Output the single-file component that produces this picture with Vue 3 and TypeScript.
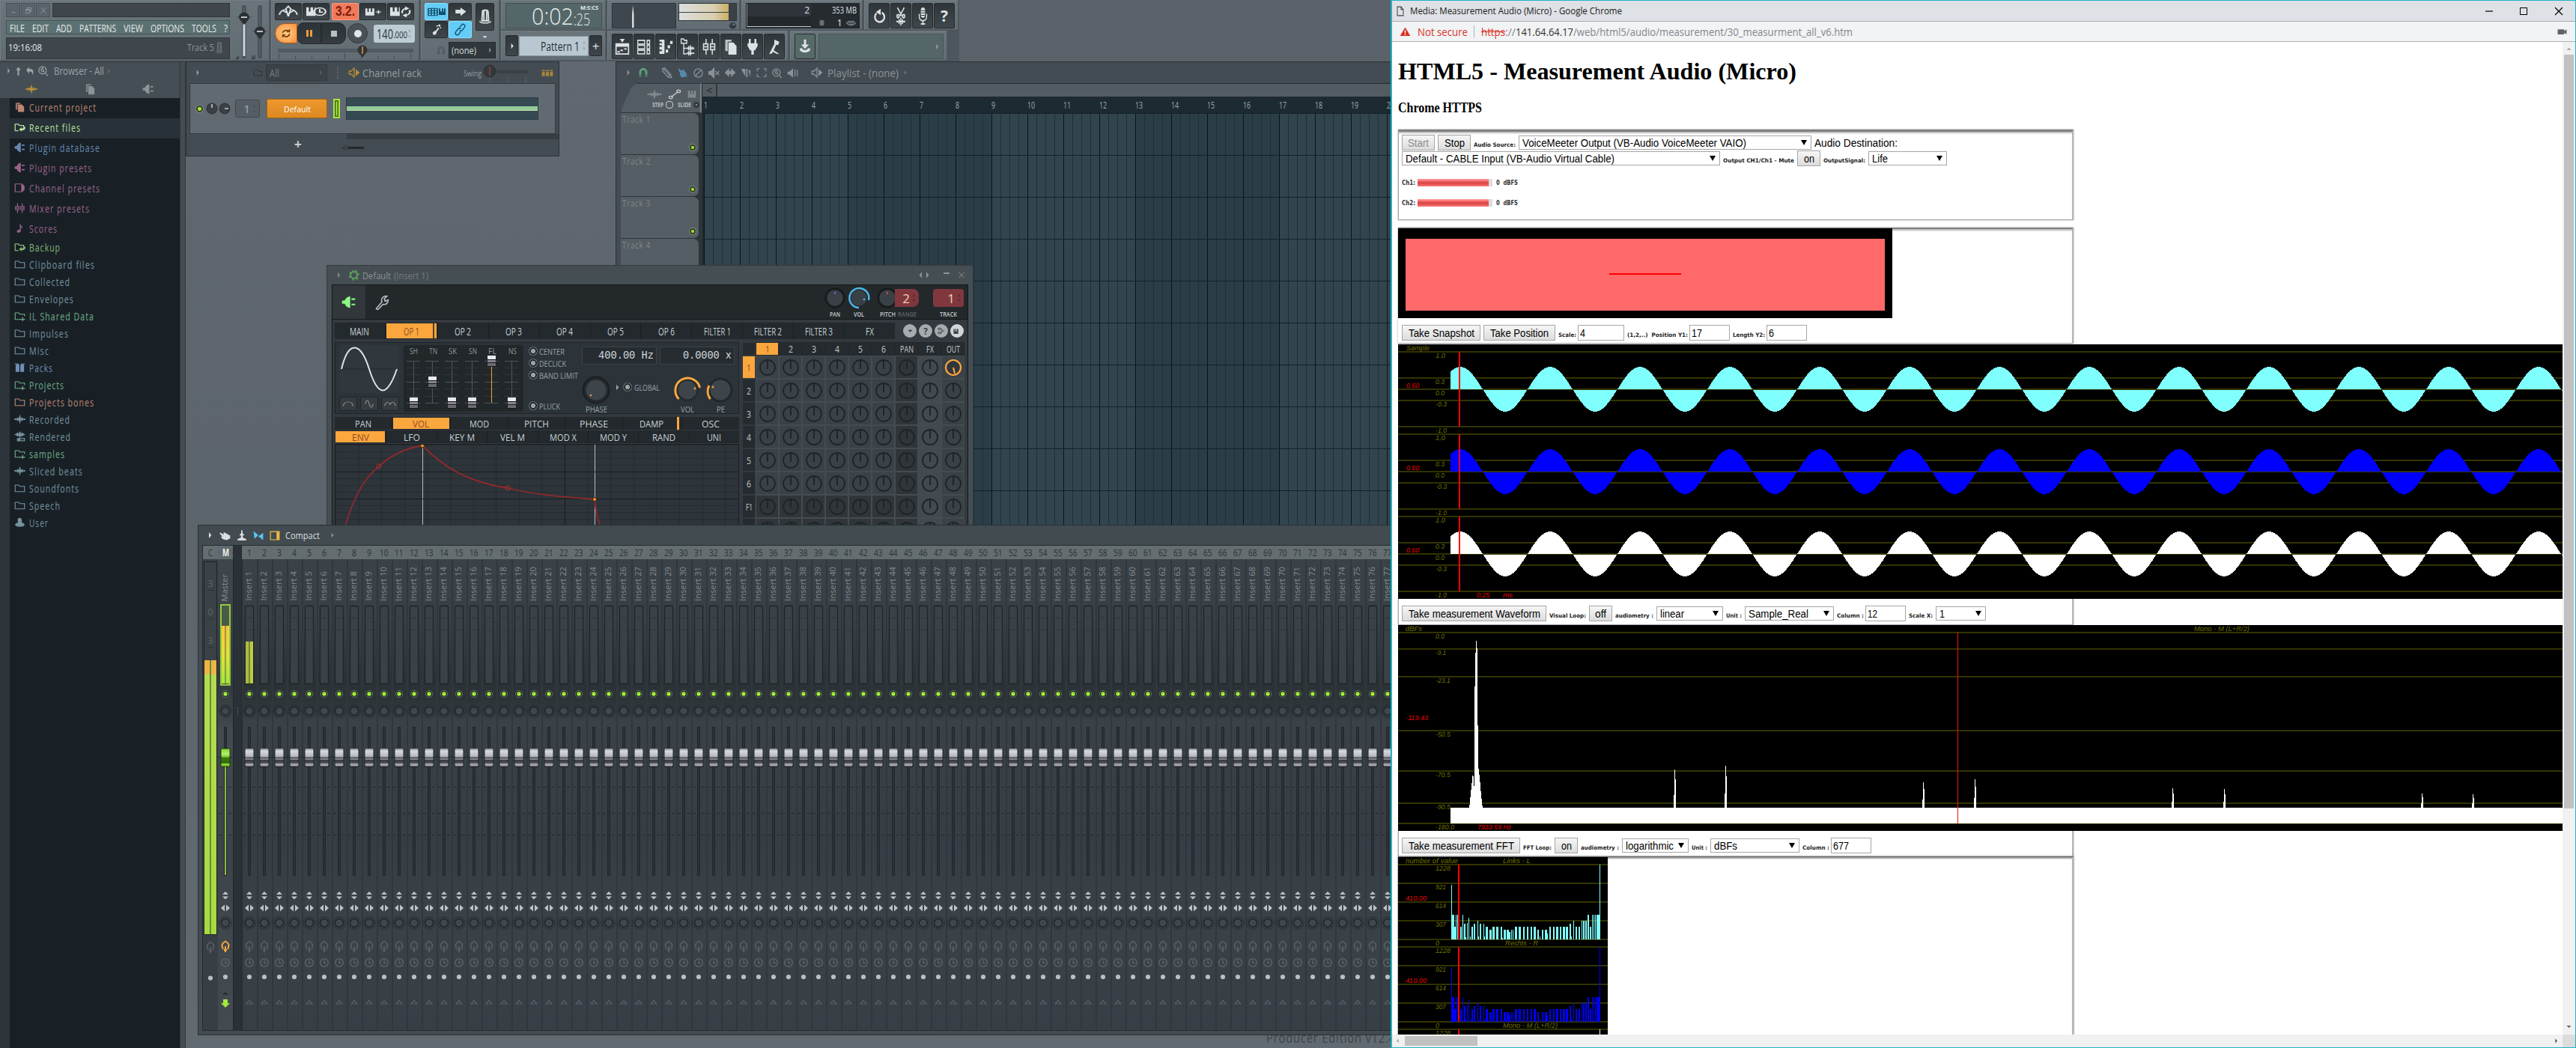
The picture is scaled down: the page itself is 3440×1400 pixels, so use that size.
<script setup lang="ts">
import { h } from 'vue'

/* Condenses an inline text to a given advance width, keeping the flow in step. */
const vFit = {
  mounted(el: HTMLElement, b: { value: number }) {
    const n = el.getBoundingClientRect().width
    if (!n || !b.value) return
    el.style.transformOrigin = '0 50%'
    el.style.transform = `scaleX(${b.value / n})`
    el.style.marginRight = `${b.value - n}px`
  },
}

const F = 'fill="currentColor"'
const S = 'fill="none" stroke="currentColor" stroke-width="2"'
const icons: Record<string, string> = {
  min: `<path d="M7 16h10v2H7z" ${F}/>`,
  restore: `<path d="M5 9h10v10H5zM9 9V5h10v10h-4M5 11h10" ${S}/>`,
  close: `<path d="M5 4l14 16M19 4L5 20" ${S}/>`,
  hat: `<path d="M8 5c0-2 8-2 8 0l1 12H7zM10 5v11M14 5v11" ${S}/><path d="M3 17c0 5 18 5 18 0-4 3-14 3-18 0z" ${F}/>`,
  metro: `<path d="M12 2l3 5-3 14-3-14zM1 18c1-6 4-9 7-10M23 18c-1-6-4-9-7-10M5 10l5 4M19 10l-5 4" ${S}/>`,
  piano: `<path d="M1 4h4v9h2V4h3v9h2V4h4v17H1z" ${F}/>`,
  keyclock: `<path d="M0 4h3v8h2V4h3v8h2V4h1v16H0z" ${F}/><circle cx="16" cy="12" r="7" ${S}/><path d="M16 7v6h4" ${S}/>`,
  keyplus: `<path d="M1 4h3v8h2V4h3v8h2V4h3v16H1z" ${F}/><path d="M16 12h8M20 8v8" ${S}/>`,
  keyloop: `<path d="M0 4h3v8h2V4h3v8h2V4h1v16H0z" ${F}/><path d="M14 15a5 7 0 0 1 4-9M22 9a5 7 0 0 1-4 10" ${S}/><path d="M17 2l5 4-5 4zM19 15l-5 4 5 4z" ${F}/>`,
  loop: `<path d="M5 11a7 7 0 0 1 11-4M19 13a7 7 0 0 1-11 5" fill="none" stroke="currentColor" stroke-width="3"/><path d="M20 2v8h-8zM4 22v-8h8z" ${F}/>`,
  typing: `<path d="M1 4h12v16H1zM1 9h12M1 14h12M5 4v16M9 4v16" fill="none" stroke="currentColor" stroke-width="1.6"/><path d="M15 4h2v7h2V4h2v7h1V4h2v15h-9z" ${F}/>`,
  right: `<path d="M3 8h9V3l10 9-10 9v-5H3z" ${F}/>`,
  foot: `<path d="M5 17c0 5 6 5 7 0 0-4 5-4 4-9l-3 1c0 5-5 4-8 8z" ${F}/><circle cx="17" cy="4" r="2" ${F}/><circle cx="13" cy="5" r="1.4" ${F}/><circle cx="19" cy="8" r="1.2" ${F}/>`,
  link: `<path d="M11 8l4-5c3-3 8 1 5 5l-4 5c-2 2-4 2-5 0M13 16l-4 5c-3 3-8-1-5-5l4-5c2-2 4-2 5 0" ${S}/>`,
  magnet: `<path d="M6 20V11a6 6 0 0 1 12 0v9" fill="none" stroke="currentColor" stroke-width="4.5"/><path d="M3 17h7M14 17h7" stroke="#434c52" stroke-width="1.4"/>`,
  tri: `<path d="M8 4l9 8-9 8z" ${F}/>`,
  tril: `<path d="M16 4l-9 8 9 8z" ${F}/>`,
  trid: `<path d="M4 8h16l-8 9z" ${F}/>`,
  undo: `<path d="M7 8a8 8 0 1 0 9-1" fill="none" stroke="currentColor" stroke-width="3"/><path d="M14 1v10L6 6z" ${F}/>`,
  cut: `<path d="M6 1l8 11M18 1l-8 11" ${S}/><circle cx="7" cy="12" r="2" ${S}/><circle cx="17" cy="12" r="2" ${S}/><path d="M4 19h16M9 16v6M12 14v10M15 16v6" ${S}/>`,
  mic: `<rect x="8" y="1" width="8" height="13" rx="4" ${F}/><path d="M5 9v3c0 8 14 8 14 0V9M12 18v4M8 22h8" ${S}/><path d="M8 5h8M8 8h8M8 11h8" stroke="#373e43"/>`,
  plist: `<path d="M2 8h20v14H2z" ${S}/><path d="M2 8h20v4H2zM8 1h8l-4 5zM4 18h4v2H4zM9 16h4v2H9zM15 14h4v2h-4z" ${F}/>`,
  steps: `<path d="M2 3h11v5H2zM2 10h11v5H2zM2 17h11v5H2zM17 3h4v5h-4zM17 10h4v5h-4zM17 17h4v5h-4z" fill="none" stroke="currentColor" stroke-width="1.6"/>`,
  roll: `<path d="M2 2h8v20H2v-4h4v-2H2v-4h4v-2H2V7h4V5H2z" ${F}/><path d="M12 16h4v4h-4zM15 10h4v4h-4zM19 4h4v4h-4z" ${F}/>`,
  tree: `<path d="M2 6V1h4l1 2h4v4H2zM6 8v14h5M6 14h5" fill="none" stroke="currentColor" stroke-width="1.6"/><path d="M11 14h12M14 11v6M17 10v8M20 12v4M11 21h12M14 18v6M17 17v7" ${S} />`,
  mixer: `<path d="M7 1v7M7 16v7M17 1v7M17 16v7M3 8h7v8H3zM14 8h7v8h-7zM3 12h7M14 12h7" fill="none" stroke="currentColor" stroke-width="1.8"/>`,
  docs: `<path d="M3 2h10v3H7v13H3z" ${F} opacity=".8"/><path d="M8 6h8l5 5v12H8z" ${F}/>`,
  plugv: `<path d="M6 1h3v6h6V1h3v6h2v4l-4 6h-2v6h-4v-6H8l-4-6V7h2z" ${F}/>`,
  hammer: `<path d="M12 2l8 3-2 5-6-2zM4 22l8-14 3 1-4 8 9 5h-4l-6-3-3 3z" ${F}/>`,
  dl: `<path d="M10 1h4v8h5l-7 7-7-7h5z" ${F}/><path d="M3 15c-3 9 21 9 18 0l-4 0c0 4-10 4-10 0z" ${F}/>`,
  up: `<path d="M12 2l6 8h-4v12h-4V10H6z" ${F}/>`,
  back: `<path d="M9 2v5c8-1 13 3 9 14-1-7-4-9-9-8v5L2 10z" ${F}/>`,
  zoomi: `<circle cx="11" cy="11" r="8" ${S}/><path d="M11 6c-6 3-2 9 3 8zM17 17l5 6" ${S}/>`,
  wave: `<path d="M0 11l3-1 2 1 2-4 1 3 2-1 2-8 2 8 2 1 1-3 2 4 2-1 3 1v2l-3 1-2-1-2 4-1-3-2 1-2 8-2-8-2-1-1 3-2-4-2 1-3-1z" ${F}/>`,
  wavebar: `<path d="M0 8l5-3 2-3 2 4 3-6 3 6 2-4 2 3 5 3-5 2-2 3-2-3-3 6-3-6-2 3-2-3z" ${F}/><path d="M7 17h15v5H7z" ${S}/><path d="M7 17h6v5H7z" ${F}/>`,
  plug: `<path d="M1 9h4c2-5 6-8 9-8v22c-3 0-7-3-9-8H1z" ${F}/><path d="M16 5h6v3h-6zM16 15h6v3h-6z" ${F}/>`,
  folder: `<path d="M2 5h8l2 3h10v12H2z" fill="none" stroke="currentColor" stroke-width="1.8"/>`,
  folderr: `<path d="M9 20H2V5h7l2 3h9v5" ${S}/><path d="M24 12c0 6-5 8-8 7v3l-6-5 6-5v3c3 0 5-1 5-5z" ${F}/>`,
  folderp: `<path d="M13 20H2V5h8l2 3h10v5" fill="none" stroke="currentColor" stroke-width="1.8"/><path d="M13 20h10M18 15v9" ${S}/>`,
  chan: `<path d="M2 3h14v18H2z" ${S}/><path d="M16 4h3l3 4v8l-3 4h-3z" ${F}/>`,
  note: `<path d="M12 1c2 6 7 6 5 13 0-4-2-5-3-5v8c-1 7-10 6-8 1 1-3 4-3 6-3z" ${F}/>`,
  box: `<path d="M3 7h8v15H3zM13 7h8v15h-8zM0 3l9 0 2 4H5zM24 3l-9 0-2 4h6z" ${F}/>`,
  user: `<path d="M8 3c4-4 10 0 8 7-1 3 7 3 6 8-2 5-18 5-20 0-1-5 7-5 6-8-1-2-1-5 0-7z" ${F}/>`,
  pencil: `<path d="M3 3l4-2 13 14 2 7-7-1L3 8zM5 3l13 14M15 20l4-4" ${S}/>`,
  brush: `<path d="M3 1l6 6 4-3 8 9-1 4 4 5-5-3-8 3-5-6 1-4-4-6z" ${F}/>`,
  nope: `<circle cx="12" cy="12" r="9" ${S}/><path d="M6 18L18 6" ${S}/>`,
  mutex: `<path d="M1 9h4l7-7v20l-7-7H1zM15 8l8 8M23 8l-8 8" ${F} stroke="currentColor" stroke-width="2"/>`,
  lr: `<path d="M10 3v6h4V3l9 9-9 9v-6h-4v6l-9-9z" ${F}/>`,
  slice: `<path d="M1 3h9v16zM12 3h3v18h-3zM17 6h4v16z" ${F}/>`,
  sel: `<path d="M2 9V3h6M16 3h6v6M22 15v6h-6M8 21H2v-6" ${S}/>`,
  spk: `<path d="M1 9h4l8-7v20l-8-7H1zM16 5h2v14h-2zM21 5h2v14h-2z" ${F}/>`,
  spko: `<path d="M2 9h4l6-6v18l-6-6H2z" ${S}/><path d="M15 5l8 7-8 7z" ${F}/>`,
  slide: `<path d="M6 18L18 6" ${S}/><circle cx="5" cy="19" r="3" ${S}/><circle cx="19" cy="5" r="3" ${S}/>`,
  gear: `<circle cx="12" cy="12" r="7" fill="none" stroke="currentColor" stroke-width="3"/><path d="M9 1h3v4H9zM15 2h4v4h-4zM3 5h4v4H3zM1 14h4v3H1zM9 19h3v4H9zM17 17h4v4h-4zM20 8h3v4h-3z" ${F}/>`,
  wrench: `<path d="M3 22l9-11c-2-6 3-10 8-9l-4 4 1 4 5-2c0 6-4 8-8 7L5 24z" ${S}/>`,
  hand: `<path d="M1 4l8 5V3l6 4 8 5 0 7-7 4-8-2-5-5 3-2-5-6z" ${F}/>`,
  pin: `<path d="M11 0h2l1 8 4 3-4 2v4l8 4v3H2v-3l8-4v-4l-4-2 4-3z" ${F}/>`,
  swap: `<path d="M1 1l11 10L3 20zM23 5v18l-11-9z" ${F}/>`,
  pane: `<path d="M2 2h20v20H2z" ${S}/><path d="M16 2h6v20h-6z" ${F}/>`,
  warn: `<path d="M12 1l11 21H1z" ${F}/><path d="M12 8v7M12 17v3" stroke="#fff" stroke-width="2.4"/>`,
  page: `<path d="M4 2h10l6 6v14H4zM14 2v6h6" ${S}/>`,
  cam: `<path d="M1 3h16v6l6-6v18l-6-6v6H1z" ${F}/>`,
  mouth: `<path d="M1 12c5-8 8-8 11-6 3-2 6-2 11 6-6 9-16 9-22 0z" ${F}/><path d="M5 12h14" stroke="#23282c" stroke-width="2"/>`,
  chip: `<path d="M6 3h12v18H6zM2 6h20M2 11h20M2 16h20" ${F} stroke="currentColor" stroke-width="1.6"/>`,
  clock: `<circle cx="12" cy="12" r="9" fill="none" stroke="currentColor" stroke-width="3"/><path d="M12 3v9h9A9 9 0 0 1 3 14z" ${F}/>`,
  bars: `<path d="M1 3h6v18H1zM9 3h6v18H9zM17 3h6v18h-6z" ${F}/><path d="M1 8h22" stroke="#434c52" stroke-width="2"/>`,
  out: `<path d="M2 3h8v5H2zM2 16h8v5H2zM10 6h4v12h-4M14 12h8" ${S}/>`,
  updn: `<path d="M6 9l6-6 6 6M6 15l6 6 6-6" ${S}/>`,
  arch: `<path d="M2 20c2-20 18-20 20 0" ${S}/>`,
  sine: `<path d="M3 12c3-14 6-12 9 0s6 14 9 0" ${S}/>`,
  humps: `<path d="M1 19C4 3 9 3 12 15 15 3 20 3 23 19" ${S}/>`,
}
const Ic = (p: { n: string; w?: number | string; t?: number | string }) =>
  h('svg', {
    width: p.w ?? 14, height: p.t ?? p.w ?? 14, viewBox: '0 0 24 24', preserveAspectRatio: 'none',
    style: 'display:block;flex:none', innerHTML: icons[p.n],
  })
Ic.props = ['n', 'w', 't']

const menu: [string, number][] = [['FILE', 20], ['EDIT', 22], ['ADD', 21], ['PATTERNS', 49], ['VIEW', 26], ['OPTIONS', 45], ['TOOLS', 33], ['?', 5]]

type Item = { t: string; w: number; c: string; i: string; big?: boolean; on?: boolean }
const g = '#77929f', gr = '#6fae86'
const items: Item[] = [
  { t: 'Current project', w: 90, c: '#bf8672', i: 'docs', big: true },
  { t: 'Recent files', w: 69, c: '#b5e2a0', i: 'folderr', big: true, on: true },
  { t: 'Plugin database', w: 95, c: '#6688b0', i: 'plug', big: true },
  { t: 'Plugin presets', w: 84, c: '#9a6488', i: 'plug', big: true },
  { t: 'Channel presets', w: 95, c: '#9a6488', i: 'chan', big: true },
  { t: 'Mixer presets', w: 81, c: '#9a6488', i: 'mixer', big: true },
  { t: 'Scores', w: 38, c: '#9a6488', i: 'note', big: true },
  { t: 'Backup', w: 42, c: '#85b577', i: 'folderr' },
  { t: 'Clipboard files', w: 88, c: g, i: 'folder' },
  { t: 'Collected', w: 55, c: g, i: 'folder' },
  { t: 'Envelopes', w: 60, c: g, i: 'folder' },
  { t: 'IL Shared Data', w: 87, c: gr, i: 'folderp' },
  { t: 'Impulses', w: 53, c: g, i: 'folder' },
  { t: 'Misc', w: 27, c: g, i: 'folder' },
  { t: 'Packs', w: 32, c: '#6f8fb5', i: 'box' },
  { t: 'Projects', w: 47, c: gr, i: 'folderp' },
  { t: 'Projects bones', w: 87, c: '#bf8672', i: 'folder' },
  { t: 'Recorded', w: 55, c: g, i: 'wave' },
  { t: 'Rendered', w: 56, c: g, i: 'wavebar' },
  { t: 'samples', w: 48, c: gr, i: 'folderp' },
  { t: 'Sliced beats', w: 72, c: g, i: 'wave' },
  { t: 'Soundfonts', w: 67, c: g, i: 'folder' },
  { t: 'Speech', w: 42, c: g, i: 'folder' },
  { t: 'User', w: 26, c: g, i: 'user' },
]

const plTools = [
  ['pencil', 15, '#8b9399', 16], ['brush', 15, '#5688ab', 6], ['nope', 15, '#8b9399', 6], ['mutex', 15, '#8b9399', 6],
  ['lr', 16, '#8b9399', 6], ['slice', 15, '#8b9399', 6], ['sel', 14, '#8b9399', 6], ['zoomi', 15, '#8b9399', 6], ['spk', 15, '#8b9399', 6],
] as [string, number, string, number][]
const bars = Array.from({ length: 20 }, (_, i) => i + 1)

const opTabs: [string, number][] = [['MAIN', 26], ['OP 1', 21], ['OP 2', 22], ['OP 3', 22], ['OP 4', 22], ['OP 5', 22], ['OP 6', 22], ['FILTER 1', 36], ['FILTER 2', 37], ['FILTER 3', 37], ['FX', 11]]
const modTabs: [string, number][] = [['PAN', 22], ['VOL', 22], ['MOD', 26], ['PITCH', 33], ['PHASE', 38], ['DAMP', 32], ['OSC', 24]]
const envTabs: [string, number][] = [['ENV', 23], ['LFO', 22], ['KEY M', 34], ['VEL M', 33], ['MOD X', 36], ['MOD Y', 36], ['RAND', 31], ['UNI', 19]]
const sliders = [
  { n: 'SH', x: 13, y: 77 }, { n: 'TN', x: 38, y: 49 }, { n: 'SK', x: 64, y: 77 }, { n: 'SN', x: 91, y: 77 }, { n: 'FL', x: 117, y: 21 }, { n: 'NS', x: 144, y: 77 },
]
const cols = ['1', '2', '3', '4', '5', '6', 'PAN', 'FX', 'OUT']
const rows = ['1', '2', '3', '4', '5', '6', 'F1', 'F2']

const inserts = Array.from({ length: 77 }, (_, i) => i + 1)

/* Web page */
type Ctl = { k: 'btn' | 'sel' | 'lab' | 'inp' | 'txt'; t: string; w: number; tw: number; off?: boolean }
const c = (k: Ctl['k'], t: string, w: number, tw: number, off = false): Ctl => ({ k, t, w, tw, off })
const src1 = [c('btn', 'Start', 44, 28, true), c('btn', 'Stop', 44, 27), c('lab', 'Audio Source:', 56, 56), c('sel', 'VoiceMeeter Output (VB-Audio VoiceMeeter VAIO)', 391, 299), c('txt', 'Audio Destination:', 111, 111)]
const src2 = [c('sel', 'Default - CABLE Input (VB-Audio Virtual Cable)', 425, 279), c('lab', 'Output CH1/Ch1 - Mute', 95, 95), c('btn', 'on', 31, 14), c('lab', 'OutputSignal:', 56, 56), c('sel', 'Life', 105, 21)]
const snap = [c('btn', 'Take Snapshot', 105, 88), c('btn', 'Take Position', 96, 78), c('lab', 'Scale:', 24, 24), c('inp', '4', 62, 7), c('lab', '(1,2,..)  Position Y1:', 81, 81), c('inp', '17', 54, 14), c('lab', 'Length Y2:', 43, 43), c('inp', '6', 54, 7)]
const wav = [c('btn', 'Take measurement Waveform', 193, 176), c('lab', 'Visual Loop:', 49, 49), c('btn', 'off', 31, 15), c('lab', 'audiometry :', 51, 51), c('sel', 'linear', 89, 32), c('lab', 'Unit :', 21, 21), c('sel', 'Sample_Real', 119, 80), c('lab', 'Column :', 36, 36), c('inp', '12', 54, 13), c('lab', 'Scale X:', 32, 32), c('sel', '1', 67, 7)]
const fft = [c('btn', 'Take measurement FFT', 158, 141), c('lab', 'FFT Loop:', 38, 38), c('btn', 'on', 31, 14), c('lab', 'audiometry :', 51, 51), c('sel', 'logarithmic', 89, 64), c('lab', 'Unit :', 21, 21), c('sel', 'dBFs', 119, 31), c('lab', 'Column :', 36, 36), c('inp', '677', 54, 21)]

const Row = (p: { r: Ctl[] }) =>
  h('div', { class: 'crow' }, p.r.map((x) => {
    const cls = ['ct', 'ct-' + x.k, x.off ? 'dis' : '']
    const kids = [h(Fit, { w: x.tw, t: x.t })]
    if (x.k === 'sel') kids.push(h('i', { class: 'dn' }))
    return h(x.k === 'btn' ? 'button' : 'span', { class: cls, style: { width: x.w + 'px' } }, kids)
  }))
Row.props = ['r']
const Fit = (p: { w: number; t: string }) =>
  h('span', { class: 'f', onVnodeMounted: (v: any) => vFit.mounted(v.el, { value: p.w }) }, p.t)
Fit.props = ['w', 't']

const wavePath = (() => {
  let d = 'M70 0'
  for (let x = 70; x <= 1555; x++) d += `L${x} ${(-30 * Math.cos(((x - 83) * 2 * Math.PI) / 120)).toFixed(1)}`
  return d + 'L1555 0Z'
})()
const waves = [{ y: 60, f: '#80ffff' }, { y: 170, f: '#0000ff' }, { y: 280, f: '#ffffff' }]
const waveLines = [[-50, '1.0', 13], [-15, '0.3', 12], [0, '0.0', 12], [15, '-0.3', 15], [50, '-1.0', 15]] as [number, string, number][]
const fftLines = [[10, '0.0', 12], [32, '-9.1', 14], [69, '-23.1', 20], [141, '-50.5', 20], [195, '-70.5', 20], [238, '-90.5', 20], [265, '-180.0', 25]] as [number, string, number][]
const peaks = [[369, 193], [437, 188], [701, 210], [770, 206], [1034, 218], [1103, 219], [1367, 225], [1435, 226]]
const histLines = [[0, '1228', 20], [25, '921', 14], [50, '614', 14], [75, '307', 14], [100, '0', 5]] as [number, string, number][]
const A = 67, B = 83, C = 87, D = 79, E = 75
const hist: [number, number, number][] = (
  [[146, 27, 2], [149, A, 4], [153, B, 3], [156, A, 3], [159, A, 2], [167, B, 3], [171, A, 2], [176, D, 2], [178, 97, 2], [182, 78, 2], [186, 71, 2], [188, 96, 1], [193, B, 4], [199, D, 3], [206, E, 2], [208, 96, 3], [213, D, 3], [220, D, 2], [222, 96, 2], [228, B, 5], [236, C, 4], [243, B, 4], [252, B, 4], [261, B, 3], [263, 98, 2], [269, C, 4], [276, C, 4], [281, 90, 3], [285, C, 3], [288, 87, 2], [295, B, 5], [304, B, 4], [313, B, 4], [322, B, 4], [331, B, 4], [339, B, 4], [347, C, 4], [351, 96, 2], [357, C, 4], [365, C, 4], [368, 92, 2], [375, B, 4], [383, B, 4], [391, B, 4], [399, B, 4], [407, B, 4], [414, B, 4], [422, D, 3], [424, 96, 2], [429, E, 2], [435, B, 4], [442, B, 3], [448, E, 2], [453, E, 3], [458, E, 4], [464, A, 3], [468, B, 3], [473, A, 3], [476, A, 2], [480, A, 3], [485, A, 4], [488, A, 3], [490, 0, 2]] as [number, number, number][]
).map(([x, y, w]) => [x / 1.742 - 12 - w / 3.4, y, w / 1.7])
</script>

<template>
  <div class="desk">
    <!-- Playlist -->
    <section class="win playlist">
      <header class="phead">
        <Ic n="tri" w="8" t="12" class="dim" /><Ic n="magnet" w="16" class="mg" />
        <span v-for="t in plTools" :key="t[0]" :style="{ color: t[2], marginLeft: t[3] + 'px' }"><Ic :n="t[0]" :w="t[1]" /></span>
        <Ic n="spko" w="16" class="dim2" /><span v-fit="95" class="t">Playlist - (none)</span><Ic n="tri" w="8" t="10" class="dim3" />
      </header>
      <div class="ptop">
        <div class="corner">
          <div class="cr1"><Ic n="wave" w="20" t="14" /><Ic n="slide" w="18" t="14" class="lt" /><Ic n="piano" w="17" t="13" /></div>
          <div class="cr2"><span v-fit="15" class="t">STEP</span><b class="rb"></b><span v-fit="18" class="t">SLIDE</span><b class="rd"></b></div>
        </div>
        <div class="pr">
          <div class="pscroll"><span class="lt2">&lt;</span><span class="trk"></span></div>
          <div class="ruler"><span v-for="b in bars" :key="b"><em v-fit="b > 9 ? 10 : 5" class="t">{{ b }}</em></span></div>
        </div>
      </div>
      <div class="pbody">
        <div class="tracks">
          <div v-for="n in 10" :key="n" class="track"><span v-fit="n > 9 ? 44 : 38" class="t">Track {{ n }}</span><i class="led"></i></div>
        </div>
        <div class="grid"></div>
      </div>
    </section>

    <div class="edition"><span v-fit="173" class="t">Producer Edition v12.4</span></div>

    <!-- Channel rack -->
    <section class="win rack">
      <header class="rhead">
        <Ic n="tri" w="8" t="12" class="r1" /><Ic n="folder" w="13" t="12" class="r2" />
        <div class="allbox"><span v-fit="13" class="t">All</span><Ic n="tri" w="7" t="10" /></div>
        <i class="dots"></i><Ic n="spko" w="16" class="r3" /><span v-fit="79" class="t rt">Channel rack</span>
        <span v-fit="24" class="t sw">Swing</span>
        <svg width="65" height="28" class="swk"><path d="M18 13h42" stroke="#3a4147" stroke-width="4" /><path d="M8 20v8M32 20v8M56 20v8" stroke="#5a6369" /><circle cx="8" cy="12" r="8" fill="#33383c" stroke="#2a2f33" /><path d="M8 6v12" stroke="#93413c" stroke-width="1.5" /></svg>
        <Ic n="bars" w="16" t="11" class="r4" />
      </header>
      <div class="rbody">
        <i class="led"></i>
        <svg width="36" height="18" class="kn"><circle cx="9" cy="9" r="7" fill="#3a4045" stroke="#282d31" /><circle cx="26" cy="9" r="7" fill="#3a4045" stroke="#282d31" /><path d="M9 3v5M26 9h5" stroke="#c4cacd" stroke-width="1.6" /></svg>
        <div class="num"><span>1</span><Ic n="updn" w="5" t="14" /></div>
        <div class="dflt"><span v-fit="36" class="t">Default</span></div>
        <div class="seli"></div>
        <div class="prev"><i></i></div>
      </div>
      <footer class="rfoot"><span class="plus">+</span><div class="rsc"><i></i><div><span>&lt;</span><b></b></div></div></footer>
    </section>

    <!-- Browser -->
    <aside class="browser">
      <div class="bhead"><Ic n="tri" w="7" t="11" /><Ic n="up" w="13" t="14" /><Ic n="back" w="13" t="14" /><Ic n="zoomi" w="15" t="15" /><span v-fit="67" class="t">Browser - All</span><Ic n="tri" w="7" t="10" class="dim3" /></div>
      <div class="btabs"><Ic n="wave" w="16" t="14" class="or" /><Ic n="docs" w="15" t="16" /><Ic n="plug" w="16" t="14" /></div>
      <ul class="blist">
        <li v-for="it in items" :key="it.t" :class="{ big: it.big, on: it.on }" :style="{ color: it.c }">
          <Ic :n="it.i" w="15" t="14" /><span v-fit="it.w" class="t">{{ it.t }}</span>
        </li>
      </ul>
    </aside>

    <!-- Toolbar -->
    <div class="bar">
      <div class="pan pa">
        <div class="pal">
          <div class="wb"><i><Ic n="min" w="12" /></i><i><Ic n="restore" w="12" /></i><i><Ic n="close" w="12" /></i><b></b></div>
          <nav class="menu"><span v-for="m in menu" :key="m[0]" v-fit="m[1]" class="t">{{ m[0] }}</span></nav>
          <div class="hint"><span v-fit="45" class="t w">19:16:08</span><span v-fit="36" class="t tr">Track 5</span><Ic n="hat" w="14" t="20" /></div>
        </div>
        <svg width="48" height="80" class="vs">
          <rect x="14" y="7" width="4" height="69" fill="#545d64" stroke="#3b4349" /><rect x="14.5" y="28" width="3" height="46" fill="#c8d4da" />
          <rect x="35" y="7" width="4" height="69" fill="#545d64" stroke="#3b4349" />
          <path d="M6 22h20M27 41h20" stroke="#454d53" /><path d="M4 78l5-5v5z" fill="#3a4247" /><path d="M26 73h1v3h1v-3h1v3h1v-3h1v5h-5z" fill="#3a4247" />
          <ellipse cx="16" cy="22" rx="7" ry="6.5" fill="#2c3135" /><path d="M12 28h8l-4 4z" fill="#2c3135" /><path d="M12 22h8" stroke="#e4e8ea" stroke-width="1.6" />
          <ellipse cx="37" cy="41" rx="7" ry="6.5" fill="#2c3135" /><path d="M33 47h8l-4 4z" fill="#2c3135" /><path d="M33 41h8" stroke="#e4e8ea" stroke-width="1.6" />
        </svg>
      </div>
      <div class="pan pb">
        <div class="br"><i class="tb"><Ic n="metro" w="26" t="17" /></i><i class="tb"><Ic n="keyclock" w="27" t="17" /></i><i class="tb red"><em v-fit="26" class="t">3.2.</em></i><i class="tb"><Ic n="keyplus" w="22" t="14" /></i><i class="tb"><Ic n="keyloop" w="28" t="17" /></i></div>
        <div class="br2"><i class="lp"><Ic n="loop" w="16" t="15" /></i><i class="ps"><b></b></i><i class="st"><b></b></i><i class="rc"><b></b></i><div class="tempo"><span v-fit="22" class="t">140</span><span v-fit="19" class="t s">.000</span><Ic n="updn" w="6" t="14" /></div></div>
        <svg width="190" height="22" class="sld"><rect x="5" y="8" width="179" height="3" fill="#59636a" stroke="#42494f" /><path d="M5.500 13v8M27.500 17v4M49.500 17v4M71.500 17v4M93.500 13v8M115.500 17v4M137.500 17v4M159.500 17v4M181.500 13v8" stroke="#454d53" /><circle cx="117" cy="9" r="6.500" fill="#2f3438" /><path d="M114 15h6l-3 4z" fill="#2f3438" /><path d="M117 4v10" stroke="#e8913a" stroke-width="1.6" /></svg>
      </div>
      <div class="pan pc">
        <div class="pcg">
          <div class="pcl"><i class="tb blue"><Ic n="typing" w="24" t="14" /></i><i class="tb"><Ic n="right" w="18" t="15" /></i><i class="tb"><Ic n="foot" w="18" t="18" /></i><i class="tb blue"><Ic n="link" w="17" t="17" /></i></div>
          <div class="pcr"><i class="tb tall"><Ic n="hat" w="22" t="25" /></i><Ic n="trid" w="9" t="7" /></div>
        </div>
        <div class="snapr"><Ic n="magnet" w="14" t="15" /><div class="none"><span v-fit="33" class="t">(none)</span><Ic n="tri" w="7" t="10" /></div></div>
      </div>
      <div class="pg">
        <div class="prow">
          <div class="pan pd"><div class="time"><span v-fit="56" class="t big">0:02</span><span v-fit="22" class="t sm">:25</span><span v-fit="24" class="t ms">M:S:CS</span></div></div>
          <div class="pan pe"><div class="osc"><svg width="84" height="32"><path d="M26 32V14l1.200-12 1.300 12v18z" fill="#d5dade" /></svg></div><div class="mt"><div class="mtb"><b></b><b></b></div><Ic n="clock" w="11" t="10" /></div></div>
          <div class="pan pf"><div class="cpu"><div class="cg"><span>2</span></div><div class="cm"><span v-fit="33" class="t">353 MB</span><div><Ic n="chip" w="9" t="9" /><em>1</em><Ic n="mouth" w="15" t="12" /></div></div></div></div>
          <div class="pan pgg"><i class="tb"><Ic n="undo" w="19" t="20" /></i><i class="tb"><Ic n="cut" w="18" t="25" /></i><i class="tb"><Ic n="mic" w="17" t="25" /></i><i class="tb q">?</i></div>
        </div>
        <div class="prow">
          <div class="pan pd2"><i class="tb"><Ic n="tri" w="8" t="11" /></i><div class="pat"><span v-fit="52" class="t">Pattern 1</span><Ic n="updn" w="6" t="14" /></div><i class="tb">+</i></div>
          <div class="pan pe2"><i v-for="k in ['plist', 'steps', 'roll', 'tree', 'mixer', 'docs', 'plugv', 'hammer']" :key="k" class="tb"><Ic :n="k" w="20" t="23" /></i></div>
          <div class="pan pf2"><i class="tb gt"><Ic n="dl" w="18" t="20" /></i><div class="news"><Ic n="tri" w="7" t="11" /></div></div>
        </div>
      </div>
    </div>

    <!-- Plugin -->
    <section class="win plugin">
      <header class="ghead"><Ic n="tri" w="7" t="11" class="dim" /><Ic n="gear" w="15" class="gg" /><span v-fit="38" class="t">Default</span><span v-fit="46" class="t d2">(Insert 1)</span><span class="grow"></span><Ic n="tril" w="9" t="13" /><Ic n="tri" w="9" t="13" /><span class="mn"></span><Ic n="close" w="12" t="11" /></header>
      <div class="gin">
        <div class="gtop">
          <i class="gp"><Ic n="plug" w="20" t="17" /></i><Ic n="wrench" w="20" t="20" class="wr" /><span class="grow"></span>
          <div class="gk"><svg width="32" height="32"><circle cx="16" cy="16" r="12.500" fill="none" stroke="#15191b" stroke-width="2" /><circle cx="16" cy="16" r="10.500" fill="#3a4146" /><path d="M16 8v3" stroke="#6a62c8" stroke-width="2" /></svg><span v-fit="14" class="t">PAN</span></div>
          <div class="gk"><svg width="32" height="32"><circle cx="16" cy="16" r="10.500" fill="#3a4146" /><path d="M16 29A13 13 0 1 1 29 19" fill="none" stroke="#4fb4e8" stroke-width="2.500" /><circle cx="23" cy="18" r="1.300" fill="#4fb4e8" /></svg><span v-fit="14" class="t">VOL</span></div>
          <div class="gk pt"><div class="gkr"><svg width="28" height="32"><circle cx="14" cy="16" r="12.500" fill="none" stroke="#15191b" stroke-width="2" /><circle cx="14" cy="16" r="10.500" fill="#3a4146" /><path d="M14 8v3" stroke="#c44a50" stroke-width="2" /></svg><i class="rr">2<Ic n="updn" w="5" t="12" /></i></div><div class="gkl"><span v-fit="21" class="t">PITCH</span><span v-fit="25" class="t d3">RANGE</span></div></div>
          <div class="gk tk"><i class="rr tkk">1<Ic n="updn" w="5" t="12" /></i><span v-fit="23" class="t">TRACK</span></div>
        </div>
        <div class="gtabs"><div class="tabs"><span v-for="(t, i) in opTabs" :key="t[0]" :class="{ on: i === 1 }"><em v-fit="t[1]" class="t">{{ t[0] }}</em></span></div><i><Ic n="trid" w="9" t="8" /></i><i>?</i><i><Ic n="out" w="10" t="10" /></i><i class="br8"><Ic n="piano" w="10" t="9" /></i></div>
        <div class="gmain">
          <div class="gleft">
            <div class="op">
              <div class="opw">
                <svg width="80" height="64" class="scr"><path d="M3 32h74" stroke="#23282c" /><path d="M3 32C12 -6 28 -6 40 32S64 70 77 32" fill="none" stroke="#dfe3e6" stroke-width="2" /></svg>
                <div class="wbn"><i><Ic n="arch" w="16" t="9" /></i><i><Ic n="sine" w="14" t="11" /></i><i><Ic n="humps" w="16" t="9" /></i></div>
              </div>
              <div class="sls">
                <div class="sll"><span v-for="s in sliders" :key="s.n"><em v-fit="11" class="t">{{ s.n }}</em></span></div>
                <svg width="160" height="90" viewBox="0 0 160 90">
                  <g v-for="s in sliders" :key="s.n"><path :d="`M${s.x + .5} 21V77`" stroke="#50575c" /><path :d="`M${s.x - 9} 21.500h18M${s.x - 9} 49.500h18M${s.x - 9} 77.500h18`" stroke="#4d5459" /><path :d="`M${s.x - 9} 30.500h18M${s.x - 9} 39.500h18M${s.x - 9} 58.500h18M${s.x - 9} 68.500h18`" stroke="#32383c" /></g>
                  <path d="M117.500 21v56" stroke="#f0a23e" />
                  <g v-for="s in sliders" :key="s.n + 't'"><rect :x="s.x - 5.500" :y="s.y - 7" width="12" height="15" fill="#15181a" /><rect :x="s.x - 5" :y="s.y - 7" width="11" height="5" fill="#e8e8ee" /><rect :x="s.x - 5" :y="s.y - 1" width="11" height="3" fill="#85858d" /><rect :x="s.x - 5" :y="s.y + 3" width="11" height="4" fill="#6a6a72" /></g>
                </svg>
              </div>
              <div class="rads"><label><i></i><span v-fit="34" class="t">CENTER</span></label><label><i></i><span v-fit="36" class="t">DECLICK</span></label><label><i></i><span v-fit="52" class="t">BAND LIMIT</span></label><label class="pk"><i></i><span v-fit="28" class="t">PLUCK</span></label></div>
              <div class="frq">
                <div class="fb"><span><em v-fit="74" class="m">400.00 Hz</em></span><span><em v-fit="65" class="m">0.0000 x</em></span></div>
                <div class="fk">
                  <div><svg width="38" height="40"><circle cx="19" cy="21" r="17.500" fill="#25292d" stroke="#1b1f22" stroke-width="2" /><circle cx="19" cy="21" r="13.500" fill="#3e454a" /><circle cx="12" cy="28" r="1.200" fill="#f0a23e" /></svg><span v-fit="29" class="t">PHASE</span></div>
                  <label><Ic n="tri" w="9" t="11" /><i></i><span v-fit="34" class="t">GLOBAL</span></label>
                  <div class="vk"><svg width="38" height="40"><circle cx="19" cy="21" r="13.500" fill="#3e454a" stroke="#22272a" stroke-width="2" /><path d="M7.500 33A16.500 16.500 0 1 1 35.500 18" fill="none" stroke="#fca73e" stroke-width="3" /><circle cx="29" cy="19" r="1.400" fill="#f0a23e" /></svg><span v-fit="18" class="t">VOL</span></div>
                  <div><svg width="38" height="40"><circle cx="19" cy="21" r="15" fill="#3e454a" stroke="#22272a" stroke-width="3" /><path d="M5.500 33A17 17 0 0 1 4 15" fill="none" stroke="#fca73e" stroke-width="3" /><circle cx="9" cy="17" r="1.400" fill="#f0a23e" /></svg><span v-fit="11" class="t">PE</span></div>
                </div>
              </div>
            </div>
            <div class="tabs sub"><span v-for="(t, i) in modTabs" :key="t[0]" :class="{ on: i === 1, mk: i === 5 }"><em v-fit="t[1]" class="t">{{ t[0] }}</em></span></div>
            <div class="tabs sub s2"><span v-for="(t, i) in envTabs" :key="t[0]" :class="{ on: i === 0 }"><em v-fit="t[1]" class="t">{{ t[0] }}</em></span></div>
            <div class="env">
              <svg width="538" height="112"><path d="M116.500 0v112M346.500 0v112" stroke="#b9c0c4" /><path d="M306.500 0v112M0 36.500h538M0 72.500h538" stroke="#181c1f" />
                <path d="M12 112C26 64 40 44 58 29 74 14 94 5 116 1 146 32 178 50 230 58 270 68 310 70 346 73Q348 96 355 112" fill="none" stroke="#8e2a2c" stroke-width="1.800" /><circle cx="58" cy="29" r="3" fill="none" stroke="#b02c30" /><circle cx="230" cy="58" r="3" fill="none" stroke="#b02c30" /><circle cx="116" cy="1.500" r="2.600" fill="#e88f2c" stroke="#43200f" /><circle cx="346" cy="73" r="2.600" fill="#e88f2c" stroke="#43200f" /></svg>
            </div>
          </div>
          <div class="mtx">
            <div class="mr mh"><b></b><span v-for="(k, i) in cols" :key="k" :class="{ on: i === 0 }"><em v-fit="i < 6 ? 6 : i === 7 ? 10 : 18" class="t">{{ k }}</em></span></div>
            <div v-for="(r, j) in rows" :key="r" class="mr">
              <b :class="{ on: j === 0 }"><em v-fit="j > 5 ? 9 : 6" class="t">{{ r }}</em></b>
              <span v-for="(k, i) in cols" :key="k" :class="{ pn: i === 6 || (j > 5 && i < 6), fx: i === 7 }">
                <svg v-if="i === 8 && j === 0" width="28" height="29"><circle cx="14" cy="15" r="10" fill="#32373b" stroke="#fca73e" stroke-width="2.200" /><path d="M14 15l2 8" stroke="#fca73e" stroke-width="2" /></svg>
                <svg v-else width="28" height="29"><circle cx="14" cy="15" r="10" fill="none" stroke="#1f2428" stroke-width="1.800" /><path d="M14 5v12" stroke="#1f2428" stroke-width="2" /></svg>
              </span>
            </div>
          </div>
        </div>
      </div>
    </section>

    <!-- Mixer -->
    <svg width="0" height="0" class="defs"><defs>
      <linearGradient id="th" x1="0" y1="0" x2="0" y2="1"><stop offset="0" stop-color="#8e9096" /><stop offset=".15" stop-color="#d8d9e0" /><stop offset=".45" stop-color="#b4b5bd" /><stop offset=".5" stop-color="#55565c" /><stop offset=".62" stop-color="#8a8b91" /><stop offset=".66" stop-color="#3b3c42" /><stop offset=".82" stop-color="#4c4c54" /><stop offset=".86" stop-color="#9d9aa5" /><stop offset="1" stop-color="#aaa7b2" /></linearGradient>
      <linearGradient id="tg" x1="0" y1="0" x2="0" y2="1"><stop offset="0" stop-color="#7fd12e" /><stop offset=".3" stop-color="#b6f06a" /><stop offset=".45" stop-color="#7fc938" /><stop offset=".52" stop-color="#3c7a0c" /><stop offset=".8" stop-color="#2f6b05" /><stop offset=".86" stop-color="#8fdc3c" /><stop offset="1" stop-color="#74b832" /></linearGradient>
      <linearGradient id="mg" x1="0" y1="0" x2="0" y2="1"><stop offset="0" stop-color="#fcc63a" /><stop offset=".5" stop-color="#e8e03c" /><stop offset="1" stop-color="#a6e83a" /></linearGradient>
      <symbol id="lower" viewBox="0 0 20 460">
        <circle cx="10" cy="10" r="4.500" fill="#1d2814" stroke="#6a7272" /><circle cx="10" cy="10" r="2.700" fill="#a0ec3e" />
        <circle cx="10" cy="33" r="8.300" fill="none" stroke="#262d33" /><circle cx="10" cy="33" r="5.500" fill="#3f484e" stroke="#1f252a" stroke-width="1.500" />
        <rect x="8.500" y="54.500" width="3" height="198" fill="#2c3238" stroke="#21272c" />
        <path d="M2 134.500h4M14 134.500h4M2 169.500h4M14 169.500h4M2 198.500h4M14 198.500h4" stroke="#22282d" />
        <path d="M10 274l4 4H6zM10 284.500l4-4H6z" fill="#bfc3c5" /><path d="M4 296l5-4.500v9zM16 296l-5-4.500v9z" fill="#bfc3c5" />
        <circle cx="10" cy="316" r="8.300" fill="none" stroke="#262d33" /><circle cx="10" cy="316" r="5.500" fill="#3f484e" stroke="#1f252a" stroke-width="1.500" />
        <circle cx="10" cy="369" r="5.300" fill="none" stroke="#5b656a" stroke-width="1.400" /><path d="M10 366v3.500h2.500" fill="none" stroke="#5b656a" stroke-width="1.400" />
        <circle cx="10" cy="388" r="3.100" fill="#b9bfc3" />
      </symbol>
      <symbol id="plugin" viewBox="0 0 12 16"><path d="M3 12c-3-6-1-8 3-10.500C10 4 12 6 9 12" fill="none" stroke="currentColor" stroke-width="2" /><path d="M5 8h2v4h1v2H7v2H5v-2H4v-2h1z" fill="currentColor" /></symbol>
    </defs></svg>
    <section class="win mixer">
      <header class="mhead"><Ic n="tri" w="9" t="12" /><Ic n="hand" w="15" t="13" /><Ic n="pin" w="14" t="14" /><Ic n="swap" w="14" t="13" class="bl" /><Ic n="pane" w="14" t="13" class="yl" /><span v-fit="46" class="t">Compact</span><Ic n="tri" w="8" t="10" class="dim3" /></header>
      <div class="mbody">
        <div class="cur"><b class="no"><em v-fit="6" class="t">C</em></b>
          <div class="cmt"><span>3</span><span>0</span><span>3</span><i></i></div>
          <svg width="20" height="130"><g color="#545c61"><use href="#plugin" x="4" y="8" width="12" height="16" /></g><circle cx="10" cy="57.500" r="3.100" fill="#b9bfc3" /></svg>
        </div>
        <div class="strip master"><b class="no"><em v-fit="9" class="t">M</em></b><div class="lb"><span>Master</span></div>
          <svg width="20" height="570"><rect x="4" y="1" width="12" height="107" fill="#4a5a48" stroke="#a6e83e" stroke-width="1.600" /><rect x="5" y="29" width="4.500" height="77" fill="url(#mg)" /><rect x="10.500" y="29" width="4.500" height="77" fill="url(#mg)" />
            <use href="#lower" y="110" width="20" height="460" /><rect x="9" y="215" width="2" height="147" fill="#86c043" /><path d="M0 204.500h20" stroke="#22282d" /><rect x="4" y="193" width="12" height="24" rx="1.500" fill="url(#tg)" stroke="#1e3a08" />
            <g color="#fba93a"><use href="#plugin" x="4" y="449" width="12" height="16" /></g><path d="M6 522l4-4 4 4z" fill="#272e33" /><path d="M7 528h6v5h3l-6 6-6-6h3z" fill="#a2e63e" /></svg>
        </div>
        <div class="gapc"><i></i></div>
        <div v-for="n in inserts" :key="n" class="strip"><b class="no"><em v-fit="n > 9 ? 11.500 : 6" class="t">{{ n }}</em></b><div class="lb"><span>Insert {{ n }}</span></div>
          <svg width="20" height="570"><rect x="4.500" y="2.500" width="11" height="104" rx="1" fill="#3a4248" stroke="#1f252a" stroke-width="1.300" /><path d="M7 18.500h6M7 34.500h6" stroke="#2b3238" />
            <template v-if="n === 1"><rect x="5" y="50" width="4.500" height="56" fill="#a9bf3f" /><rect x="10.500" y="50" width="4.500" height="56" fill="#bfcc3f" /></template>
            <use href="#lower" y="110" width="20" height="460" /><path d="M0 204.500h20" stroke="#22282d" /><rect x="3.500" y="193" width="13" height="25" rx="2" fill="#20262a" /><rect x="4.500" y="193" width="11" height="23.500" rx="1.500" fill="url(#th)" />
            <g color="#545c61"><use href="#plugin" x="4" y="449" width="12" height="16" /></g><path d="M6 534l4-4.500 4 4.500z" fill="none" stroke="#566066" stroke-width="1.200" /></svg>
        </div>
      </div>
    </section>

    <!-- Browser window with the measurement page -->
    <section class="chrome">
      <header class="ctitle"><Ic n="page" w="12" t="14" /><span v-fit="283" class="u">Media: Measurement Audio (Micro) - Google Chrome</span><span class="grow"></span>
        <svg width="110" height="14"><path d="M2 7h10" stroke="#000" stroke-width="1.200" /><rect x="48.500" y="2.500" width="9" height="9" fill="none" stroke="#000" /><path d="M95 2l10 10M105 2L95 12" stroke="#000" stroke-width="1.200" /></svg></header>
      <div class="caddr"><Ic n="warn" w="15" t="13" class="wn" /><span v-fit="67" class="u ns">Not secure</span><i></i><span v-fit="32" class="u hs">https</span><span v-fit="14" class="u gy">://</span><span v-fit="77" class="u">141.64.64.17</span><span v-fit="373" class="u gy">/web/html5/audio/measurement/30_measurment_all_v6.htm</span><span class="grow"></span><Ic n="cam" w="13" t="9" class="cm9" /></div>
      <div class="cmain">
        <div class="cpage">
          <h1><span v-fit="532">HTML5 - Measurement Audio (Micro)</span></h1>
          <h3><span v-fit="112">Chrome HTTPS</span></h3>
          <div class="fs f1">
            <Row :r="src1" /><Row :r="src2" class="rw2" />
            <div class="lvl"><Fit :w="18" t="Ch1:" /><i><b></b></i><Fit :w="29" t="0  dBFS" /></div>
            <div class="lvl"><Fit :w="18" t="Ch2:" /><i><b></b></i><Fit :w="29" t="0  dBFS" /></div>
          </div>
          <div class="fs f2">
            <div class="cv1"><div><i></i></div></div>
            <Row :r="snap" class="rws" />
          </div>
          <svg class="cv" width="1555" height="340" shape-rendering="crispEdges">
            <rect width="1555" height="340" fill="#000" />
            <g v-for="(w, i) in waves" :key="i" :transform="`translate(0 ${w.y})`">
              <rect v-for="l in waveLines" :key="l[1]" x="0" :y="l[0] - 1" width="1555" height="2" fill="#333300" />
              <path :d="wavePath" :fill="w.f" /><rect y="0" width="1555" height="1" fill="#333300" /><rect x="81" y="-50" width="2" height="100" fill="#f00" />
              <text v-for="l in waveLines" :key="l[1] + 't'" x="50" :y="l[0] + 8" :textLength="l[2]" lengthAdjust="spacingAndGlyphs">{{ l[1] }}</text>
              <text class="r" x="11" y="-2" textLength="17" lengthAdjust="spacingAndGlyphs">0.60</text>
            </g>
            <text x="11" y="8" textLength="31" lengthAdjust="spacingAndGlyphs">Sample</text>
            <text class="r" x="105" y="338" textLength="17" lengthAdjust="spacingAndGlyphs">0.25</text><text class="r" x="140" y="338" textLength="13" lengthAdjust="spacingAndGlyphs">ms</text>
          </svg>
          <div class="fs f3"><Row :r="wav" /></div>
          <svg class="cv" width="1555" height="275" shape-rendering="crispEdges">
            <rect width="1555" height="275" fill="#000" />
            <rect v-for="l in fftLines" :key="l[0]" x="0" :y="l[0] - 1" width="1555" height="2" fill="#333300" />
            <text v-for="l in fftLines" :key="l[1]" x="50" :y="l[0] + 8" :textLength="l[2]" lengthAdjust="spacingAndGlyphs">{{ l[1] }}</text>
            <rect x="70" y="244" width="1485" height="21" fill="#fff" />
            <path d="M95 245L100 196l2 25V82h1V37h1V21h1v10h1v48l1 109 2 16 2 24 2 17z" fill="#fff" />
            <g v-for="p in peaks" :key="p[0]" fill="#fff">
              <rect :x="p[0]" :y="p[1]" width="1" :height="245 - p[1]" />
              <rect :x="p[0] + 1" :y="245 - (245 - p[1]) * .75" width="1" :height="(245 - p[1]) * .75" />
              <rect :x="p[0] - 1" :y="245 - (245 - p[1]) * .35" width="1" :height="(245 - p[1]) * .35" />
            </g>
            <rect x="747" y="9" width="1" height="257" fill="#f01010" />
            <text x="10" y="8" textLength="22" lengthAdjust="spacingAndGlyphs">dBFs</text><text x="1063" y="8" textLength="74" lengthAdjust="spacingAndGlyphs">Mono - M (L+R/2)</text>
            <text class="r" x="10" y="127" textLength="30" lengthAdjust="spacingAndGlyphs">-119.43</text><text class="r" x="106" y="273" textLength="45" lengthAdjust="spacingAndGlyphs">7933.59 Hz</text>
          </svg>
          <div class="fs f4"><Row :r="fft" /></div>
          <div class="fs f5">
            <svg class="cv" width="280" height="237" shape-rendering="crispEdges">
              <rect width="280" height="237" fill="#000" />
              <g v-for="(o, k) in [10, 120, 230]" :key="o" :transform="`translate(0 ${o})`">
                <rect v-for="l in histLines" :key="l[0]" x="0" :y="l[0] - 1" width="280" height="2" fill="#333300" />
                <text v-for="l in histLines.slice(0, k === 2 ? 1 : 5)" :key="l[1]" x="50" :y="l[0] + 8" :textLength="l[2]" lengthAdjust="spacingAndGlyphs">{{ l[1] }}</text>
                <rect v-for="(b, i) in hist" :key="i" :x="b[0]" :y="b[1]" :width="Math.max(1, b[2])" :height="100 - b[1]" :fill="['#80ffff', '#0000ff', '#ffffff'][k]" />
                <rect x="80" y="0" width="2" height="100" fill="#f00" />
                <text v-if="k < 2" class="r" x="10" y="48" textLength="28" lengthAdjust="spacingAndGlyphs">410.00</text>
              </g>
              <text x="10" y="8" textLength="70" lengthAdjust="spacingAndGlyphs">number of value</text><text x="140" y="8" textLength="37" lengthAdjust="spacingAndGlyphs">Links - L</text><text x="143" y="118" textLength="44" lengthAdjust="spacingAndGlyphs">Rechts - R</text><text x="140" y="228" textLength="73" lengthAdjust="spacingAndGlyphs">Mono - M (L+R/2)</text>
            </svg>
          </div>
        </div>
        <div class="vsb"><Ic n="trid" w="9" t="7" class="upi" /><b></b><Ic n="trid" w="9" t="7" /></div>
      </div>
      <div class="hsb"><Ic n="tril" w="7" t="9" class="lf" /><b></b><span class="grow"></span><Ic n="tri" w="7" t="9" class="rg" /><i></i></div>
    </section>
  </div>
</template>

<style>
body { margin: 0; background: #5f676e; overflow: hidden; }
.crow { display: flex; align-items: center; gap: 4px; height: 21px; font: 14px "Liberation Sans", Arial, sans-serif; color: #000; }
.crow .f, .lvl .f { display: inline-block; flex: none; white-space: pre; }
.crow .ct { box-sizing: border-box; flex: none; display: flex; align-items: center; overflow: hidden; }
.crow .ct-btn { height: 21px; margin: 0; padding: 0; border: 1px solid #a5a5a5; background: linear-gradient(#f6f6f6, #dcdcdc); justify-content: center; font: inherit; color: #000; }
.crow .dis { color: #8a8a8a; }
.crow .ct-sel { height: 19px; border: 1px solid #a6a6a6; background: #fff; padding-left: 4px; justify-content: space-between; }
.crow .dn { width: 0; height: 0; border: 4px solid transparent; border-top: 7px solid #000; border-bottom: 0; margin-right: 5px; flex: none; }
.crow .ct-inp { height: 21px; border: 1px solid #a6a6a6; background: #fff; padding-left: 2px; margin-left: -2px; }
.crow .ct-lab { font: bold 7.500px "DejaVu Sans", sans-serif; color: #222; padding-top: 5px; }
</style>

<style scoped>
* { box-sizing: border-box; }
.desk { position: relative; width: 3440px; height: 1400px; overflow: hidden; background: linear-gradient(#61686f, #5d656c 50%, #626a71); font: 14px "Open Sans", "Noto Sans", sans-serif; color: #ccd3d7; }
.t, .u { display: inline-block; white-space: pre; flex: none; font-style: normal; }
.grow { flex: 1; }
i, em { font-style: normal; }
.win { position: absolute; background: #434c52; border: 1px solid #2b3238; }
.dim { color: #8b9399; }
.dim3 { color: #687178; }
.led { width: 9px; height: 9px; border-radius: 50%; background: #a0ec3e; border: 2px solid #38451f; box-shadow: 0 0 0 1px #7d868a; flex: none; }

/* toolbar */
.bar { position: absolute; left: 0; top: 0; width: 1858px; height: 82px; display: flex; background: linear-gradient(90deg, #4d565d 0 1281px, #5b6269 1281px); color: #dfe4e6; }
.pan { background: linear-gradient(#6a747b, #616c73); border: 1px solid #727c83; border-bottom-color: #50595f; border-right-color: #50595f; display: flex; }
.pa { width: 360px; height: 81px; margin-right: 2px; padding: 3px 0 0 7px; }
.pal { width: 299px; display: flex; flex-direction: column; gap: 4px; }
.wb { display: flex; gap: 1px; height: 19px; }
.wb i { width: 19px; background: #59636a; border: 1px solid #4a5359; display: flex; align-items: center; justify-content: center; color: #8a949a; }
.wb b { flex: 1; margin-left: 2px; background: #3f474d; border: 1px solid #2f363b; }
.menu { height: 19px; background: #5b7172; border: 1px solid #475558; display: flex; align-items: center; gap: 10px; padding-left: 4px; font-size: 15px; color: #e8ecec; }
.hint { height: 29px; background: #3f474d; border: 1px solid #2f363b; display: flex; align-items: center; padding: 0 2px 2px 2px; font-size: 12.500px; color: #676f75; }
.hint .w { color: #e6eaec; }
.hint .tr { margin-left: 194px; margin-right: 4px; color: #8d959a; }
.vs { margin: -3px 0 0 3px; }
.pb { width: 198px; height: 81px; margin-right: 2px; flex-direction: column; padding: 3px 0 0 4px; }
.tb { width: 28px; height: 34px; background: linear-gradient(#2f363a, #3f474c); border: 1px solid #262c30; border-radius: 2px; display: flex; align-items: center; justify-content: center; flex: none; color: #dde2e4; }
.br { display: flex; gap: 1px; }
.br .tb { width: 36px; height: 23px; }
.br .red { margin-left: 2px; background: #f0795c; border-color: #ff9c7c; color: #7c1c08; font: italic bold 18px "Liberation Sans", sans-serif; }
.br2 { display: flex; height: 29px; margin-top: 3px; align-items: center; }
.lp { width: 30px; height: 27px; background: radial-gradient(#ffd58a, #f78a3c); border: 1px solid #b35718; border-radius: 14px 0 0 14px; display: flex; align-items: center; justify-content: center; color: #87420c; }
.ps, .st { width: 32px; height: 29px; background: linear-gradient(#2d3337, #343c41); border: 1px solid #262b2e; display: flex; align-items: center; justify-content: center; }
.ps { border-radius: 8px 0 0 8px; }
.ps b { width: 8px; height: 9px; border: solid #ee9b3c; border-width: 0 3px; }
.st { width: 33px; border-radius: 0 10px 10px 0; }
.st b { width: 8px; height: 8px; background: #b9c0c4; }
.rc { width: 27px; height: 27px; border-radius: 50%; background: #4a5257; border: 1px solid #30363a; margin-left: 2px; display: flex; align-items: center; justify-content: center; }
.rc b { width: 10px; height: 10px; border-radius: 50%; background: #e2e6e8; }
.tempo { width: 55px; height: 24px; margin-left: 8px; border-radius: 3px; background: #bdcdd4; color: #29333a; display: flex; align-items: center; padding-left: 4px; font-size: 18px; }
.tempo .s { font-size: 13px; padding-top: 3px; }
.tempo svg { color: #8b9aa2; }
.sld { margin-top: -1px; }
.pc { width: 105px; height: 81px; margin-right: 2px; flex-direction: column; padding: 3px 0 0 4px; }
.pcg { display: flex; height: 50px; }
.pcl { display: flex; flex-wrap: wrap; gap: 1px; width: 64px; align-content: flex-start; }
.pcl .tb { width: 31px; height: 23px; }
.tb.blue { background: #63cdf7; border-color: #8be0ff; color: #15506e; }
.pcr { display: flex; flex-direction: column; align-items: center; gap: 5px; margin-left: 4px; }
.pcr .tall { width: 25px; height: 37px; }
.snapr { display: flex; align-items: center; gap: 3px; padding-left: 15px; margin-top: 2px; color: #555e64; }
.none { width: 63px; height: 22px; background: #31383d; border: 1px solid #252b2f; display: flex; align-items: center; justify-content: space-between; padding: 0 3px 0 3px; color: #d6dadc; font-size: 13px; }
.none svg { color: #89929a; }
.pg { display: flex; flex-direction: column; gap: 1px; }
.prow { display: flex; gap: 2px; height: 40px; }
.prow .pan { height: 40px; padding: 3px 0 0 5px; }
.prow .pan.pd { width: 140px; }
.time { width: 129px; height: 34px; background: #546668; border: 1px solid #434f52; display: flex; align-items: center; padding-left: 34px; color: #e6eced; }
.time .big { font-size: 31px; font-weight: 300; }
.time .sm { font-size: 22px; padding-top: 7px; font-weight: 300; }
.time .ms { font-size: 7px; font-weight: bold; margin-left: -13px; margin-top: -22px; }
.pan.pe { width: 177px; gap: 3px; }
.osc { width: 86px; height: 34px; background: #3f474e; border: 1px solid #2e3439; }
.mt { width: 78px; display: flex; flex-direction: column; align-items: flex-end; gap: 1px; color: #333a3f; }
.mtb { width: 78px; height: 24px; background: #3a4248; border: 1px solid #2e3439; display: flex; flex-direction: column; gap: 1px; padding-top: 0; }
.mtb b { width: 66px; height: 11px; background: linear-gradient(90deg, #dcdedb, #d8cfb2 70%, #cbb064); }
.pan.pf { width: 162px; }
.cpu { width: 152px; height: 34px; background: #262b30; border: 1px solid #1f2428; display: flex; font-size: 13px; line-height: 17px; }
.cg { width: 86px; height: 31px; border-bottom: 1px solid #c8cdd0; background: linear-gradient(#2e343a 0 17px, #23282d 17px); border-left: 1px solid #888; text-align: right; padding-right: 2px; }
.cg span { font-size: 12px; }
.cm { width: 64px; display: flex; flex-direction: column; align-items: flex-end; padding-right: 3px; }
.cm div { display: flex; align-items: center; gap: 4px; color: #6b7378; }
.cm em { color: #dfe4e6; margin-left: 12px; }
.prow .pan.pgg { width: 126px; gap: 1px; }
.q { font-size: 21px; font-weight: bold; }
.pan.pd2 { width: 140px; align-items: center; padding-top: 0 !important; gap: 1px; }
.pd2 .tb { width: 17px; height: 28px; font-size: 17px; }
.pat { width: 93px; height: 27px; background: #b9c8d0; border: 1px solid #8997a0; display: flex; align-items: center; justify-content: flex-end; gap: 3px; padding-right: 2px; color: #273036; font-size: 17px; }
.pat svg { color: #8b9aa2; }
.pan.pe2 { width: 242px; gap: 1px; }
.pan.pf2 { width: 210px; gap: 4px; }
.gt { background: #566b68; }
.news { width: 167px; height: 34px; background: #546668; border: 1px solid #475558; display: flex; align-items: center; justify-content: flex-end; padding-right: 4px; color: #8ea09f; }

/* browser */
.browser { position: absolute; left: 0; top: 82px; width: 248px; height: 1318px; background: linear-gradient(90deg, #2c343a 0 13px, #182026 13px 240px, #30373c 240px 241px, #454d54 241px 247px, #30373c 247px); border-top: 1px solid #343b40; }
.bhead { width: 240px; height: 23px; background: #454e54; display: flex; align-items: center; gap: 3px; padding-left: 8px; color: #9aa3a8; font-size: 14px; }
.bhead .t { margin-left: 4px; margin-right: 4px; }
.btabs { width: 240px; height: 25px; background: #454e54; display: flex; align-items: center; padding: 0 34px; justify-content: space-between; color: #8b9498; }
.or { color: #b58d3c; }
.blist { list-style: none; margin: 0 0 0 13px; padding: 0; width: 227px; }
.blist li { height: 23px; display: flex; align-items: center; padding: 0 0 3px 6px; gap: 5px; font-size: 15px; letter-spacing: 1.500px; }
.blist li.big { height: 27px; }
.blist li.on { background: #293138; }

/* channel rack */
.rack { left: 248px; top: 82px; width: 499px; height: 127px; color: #959da2; }
.rhead { height: 28px; display: flex; align-items: center; }
.r1 { margin-left: 11px; }
.r2 { margin-left: 70px; color: #2d3439; margin-right: 4px; }
.allbox { width: 82px; height: 22px; background: #3b4348; border: 1px solid #333a3f; display: flex; align-items: center; justify-content: space-between; padding: 0 4px; color: #747c82; }
.allbox svg { color: #596167; }
.dots { width: 2px; height: 16px; margin: 0 13px 0 13px; border-left: 2px dotted #5d666c; }
.r3 { color: #b58d3c; }
.rt { margin-left: 3px; font-size: 15px; }
.sw { margin-left: 56px; font-size: 11px; }
.swk { margin-left: 3px; }
.r4 { margin-left: 12px; color: #a8853f; }
.rbody { margin: 0 4px; height: 68px; background: #626a71; border: 1px solid #323a3f; display: flex; align-items: center; padding-left: 8px; }
.kn { margin-left: 3px; }
.num { width: 33px; height: 24px; margin-left: 4px; background: #565e65; border: 1px solid #40474d; border-radius: 3px; display: flex; align-items: center; justify-content: flex-end; gap: 3px; padding-right: 4px; color: #aab1b5; font-size: 15px; }
.num svg { color: #41484d; }
.dflt { width: 81px; height: 26px; margin-left: 9px; background: linear-gradient(#ee982c, #dd8920); border: 1px solid #9b6116; border-radius: 2px; display: flex; align-items: center; justify-content: center; color: #fff; font-size: 11.500px; }
.seli { width: 9px; height: 26px; margin-left: 8px; background: #a5e83c; border: 2px solid #a5e83c; box-shadow: inset 0 0 0 1.500px #45611c; }
.prev { width: 257px; height: 30px; margin-left: 8px; background: #364a54; border: 1px solid #2e3b43; padding-top: 11px; }
.prev i { display: block; height: 6px; background: #94cb97; border-bottom: 1px solid #c3dfb0; }
.rfoot { display: flex; height: 29px; color: #c9ced1; }
.plus { width: 214px; padding-left: 144px; font-size: 17px; font-weight: bold; line-height: 28px; }
.rsc { flex: 1; }
.rsc > i { display: block; height: 7px; background: #363e44; }
.rsc div { display: flex; align-items: center; margin-left: -7px; gap: 1px; font-size: 13px; line-height: 23px; color: #262c30; }
.rsc b { width: 22px; height: 3px; background: #23292d; }

/* playlist */
.playlist { left: 822px; top: 82px; width: 1040px; height: 640px; }
.phead { height: 28px; display: flex; align-items: center; padding-left: 12px; color: #8b9399; }
.mg { color: #5aa07c; margin-left: 8px; }
.dim2 { margin-left: 17px; margin-right: 5px; }
.phead .t { font-size: 15px; margin-left: 1px; }
.phead .dim3 { margin-left: 5px; }
.ptop { display: flex; margin-left: 6px; height: 40px; }
.corner { width: 110px; height: 40px; background: #535c62; border: 1px solid #2f363b; border-right: 2px solid #7a8388; clip-path: polygon(22px 0, 100% 0, 100% 100%, 0 100%, 2px 32px, 14px 6px); color: #80898e; }
.cr1 { display: flex; gap: 8px; margin: 5px 0 0 34px; height: 17px; align-items: center; }
.lt { color: #c3c9cc; }
.cr2 { display: flex; align-items: center; gap: 3px; margin-left: 41px; font-size: 8px; font-weight: bold; color: #b9c0c3; }
.rb { width: 10px; height: 10px; border: 1px solid #c9ced1; border-radius: 4px; margin-right: 3px; }
.rd { width: 8px; height: 8px; border-radius: 50%; background: #aaa; border: 3px solid #343b40; }
.pr { flex: 1; }
.pscroll { height: 19px; display: flex; background: #535c62; border: 1px solid #242b30; }
.lt2 { width: 20px; border-right: 2px solid #343b40; font-size: 15px; line-height: 17px; padding-left: 5px; color: #23292d; }
.ruler { height: 21px; background: #1e2a31; display: flex; overflow: hidden; padding-left: 1px; }
.ruler span { width: 48px; flex: none; padding-left: 2px; font-size: 12px; line-height: 21px; color: #9fabb1; }
.pbody { display: flex; margin-left: 6px; height: 571px; }
.tracks { width: 111px; border-right: 2px solid #20282d; background: #2c353a; }
.track { height: 56px; width: 104px; border-bottom: 1px solid #2e363b; border-radius: 0 7px 7px 0; background: #555e64; padding: 0 0 0 2px; color: #7e878c; font-size: 12.500px; line-height: 17px; display: flex; justify-content: space-between; letter-spacing: 1px; }
.track .led { margin: 42px 4px 0 0; width: 8px; height: 8px; }
.grid { flex: 1; background:
  repeating-linear-gradient(#13202a 0 1px, transparent 1px 56px),
  repeating-linear-gradient(90deg, #08131a 0 1px, transparent 1px 48px),
  repeating-linear-gradient(90deg, #1f2f38 0 1px, transparent 1px 12px),
  repeating-linear-gradient(90deg, #32454f 0 192px, #2b3e48 192px 384px); }
.edition { position: absolute; left: 1691px; top: 1374px; font-size: 18px; letter-spacing: 1px; line-height: 24px; color: #3c444a; white-space: nowrap; }

/* plugin */
.plugin { left: 436px; top: 354px; width: 864px; height: 362px; background: #454e53; padding: 0 6px; border-color: #343b40; }
.ghead { height: 25px; display: flex; align-items: center; padding: 0 3px 0 6px; color: #8b9398; font-size: 13px; }
.gg { color: #5ba35a; margin: 0 4px 0 9px; }
.ghead .d2 { margin-left: 4px; color: #737c81; }
.mn { width: 8px; height: 2px; background: #8b9398; margin: -5px 10px 0 17px; }
.gin { background: #33393f; border: 1px solid #14181a; height: 335px; }
.gtop { height: 46px; background: #23282b; border-bottom: 1px solid #14171a; display: flex; align-items: center; }
.gp { width: 44px; height: 45px; background: #31373b; display: flex; align-items: center; justify-content: center; color: #8cf883; }
.wr { margin-left: 12px; color: #b5bcc0; }
.gk { display: flex; flex-direction: column; align-items: center; font-size: 9px; line-height: 11px; color: #c3c9cc; font-weight: 600; }
.gkr, .gkl { display: flex; align-items: center; }
.gkl { gap: 3px; }
.d3 { color: #5b6267; }
.rr { width: 32px; height: 24px; background: #80383e; border-radius: 0 8px 8px 0; color: #f0d2ae; font-size: 17px; font-weight: 400; display: flex; align-items: center; justify-content: flex-end; gap: 3px; padding-right: 4px; margin-left: -4px; }
.rr svg { color: #4a1c20; }
.tkk { width: 41px; border-radius: 4px; margin: 4px 0 4px; }
.pt { margin-left: 8px; }
.tk { margin: 0 5px 0 19px; }
.gtabs { display: flex; align-items: center; height: 30px; padding-left: 3px; gap: 3px; }
.tabs { display: flex; width: 748px; height: 22px; background: #1c2023; gap: 1px; }
.gtabs .tabs { margin-right: 8px; }
.gtabs .br8 { background: #d0d5d8; }
.gtabs > i { width: 18px; height: 18px; border-radius: 50%; background: #a5abae; color: #3a4146; display: flex; align-items: center; justify-content: center; font-size: 12px; font-weight: bold; }
.tabs span { flex: 1; background: #23292d; display: flex; align-items: center; justify-content: center; font-size: 15px; color: #c9d1d5; }
.tabs .on { background: #fca63e; color: #8c4f20; border: 1px solid #22282c; }
.gtabs .tabs .on { box-shadow: inset -3px 0 0 #fca63e, inset -5px 0 0 #5a3c1a; }
.tabs .mk { border-right: 3px solid #22282c; box-shadow: inset -3px 0 0 #fca63e; }
.gmain { display: flex; gap: 5px; padding-left: 3px; }
.gleft { width: 540px; }
.op { height: 96px; background: #2c343a; border: 1px solid #1e2326; display: flex; padding: 3px 0 0 5px; }
.opw { width: 80px; }
.scr { background: #31383d; border-radius: 4px; display: block; }
.wbn { display: flex; justify-content: space-between; margin-top: 5px; }
.wbn i { width: 24px; height: 19px; background: #363c40; border: 1px solid #1f2427; border-radius: 3px; display: flex; align-items: center; justify-content: center; color: #8d9498; }
.sls { width: 160px; height: 89px; background: #22272a; border-radius: 4px; margin-left: 6px; position: relative; }
.sll { display: flex; position: absolute; left: 0; top: 0; padding-left: 0; }
.sll span { width: 26.400px; display: flex; justify-content: center; font-size: 11.500px; line-height: 16px; color: #8d969a; }
.rads { width: 74px; margin-left: 7px; display: flex; flex-direction: column; }
.rads label, .fk label { display: flex; align-items: center; gap: 2px; height: 16px; font-size: 11.500px; color: #97a1a6; }
.rads i, .fk label i { width: 12px; height: 12px; flex: none; border-radius: 50%; background: radial-gradient(circle, #9aa3a8 0 2.800px, #1f2427 3.400px 4.600px, #646d72 5px 6px); }
.rads .pk { margin-top: 25px; }
.fb { display: flex; gap: 4px; margin: 2px 0 0 -3px; }
.fb span { width: 100px; height: 24px; background: #262c30; border: 1px solid #3b4348; display: flex; align-items: center; justify-content: flex-end; padding-right: 3px; color: #d5dbdf; }
.m { display: inline-block; white-space: pre; font: 14.500px "Liberation Mono", monospace; flex: none; }
.fk { display: flex; margin-top: 13px; font-size: 11.500px; line-height: 13px; color: #97a1a6; margin-left: -3px; }
.fk > div { width: 38px; display: flex; flex-direction: column; align-items: center; }
.fk label { margin: 9px 0 0 5px; gap: 3px; width: 69px; }
.fk .vk { margin-left: 10px; }
.fk .vk + div { margin-left: 6px; }
.sub { width: 540px; height: 17px; margin-top: 4px; }
.sub span { font-size: 13px; }
.s2 { margin-top: 1px; }
.env { height: 112px; margin-top: 1px; border: 1px solid #1a1e21; background: repeating-linear-gradient(#262c30 0 1px, transparent 1px 9px), repeating-linear-gradient(90deg, #252b2f 0 1px, transparent 1px 30.600px), #2d343a; }
.env svg { display: block; }
.mtx { width: 297px; margin-left: -1px; }
.mr { display: flex; height: 31px; }
.mh { height: 18px; }
.mr b { width: 18px; border: 1px solid #33393f; background: #262b2f; display: flex; align-items: center; justify-content: center; font-size: 13px; font-weight: 400; color: #c1c9cd; }
.mr span { width: 31px; border: 1px solid #23282c; outline: 1px solid #454c51; outline-offset: -1px; background: #3b4247; display: flex; justify-content: center; overflow: hidden; font-size: 13px; align-items: center; color: #c1c9cd; }
.mh span { background: #262b2f; outline: none; }
.mr .on { background: #fca63e; color: #8c4f20; }
.mr .pn { background: #303539; }
.mr .fx { background: #434a4f; }
.mh .fx, .mh .pn { background: #262b2f; }

/* mixer */
.defs { position: absolute; }
.mixer { left: 264px; top: 701px; width: 1600px; height: 682px; background: #424b50; padding-left: 5px; border-color: #2a3136; }
.mhead { height: 26px; display: flex; align-items: center; color: #dadee0; padding-left: 6px; font-size: 12.500px; }
.mhead svg { margin-right: 8px; }
.mhead .t { margin-left: -1px; }
.mhead .dim3 { margin-left: 13px; color: #8a9297; }
.bl { color: #5cc0f2; }
.yl { color: #f3bb41; }
.mbody { display: flex; height: 649px; border: 1px solid #252c31; border-right: 0; overflow: hidden; background: #394046; }
.no { height: 18px; background: #646d70; display: flex; align-items: center; justify-content: center; font-size: 13.500px; font-weight: 400; color: #2b3236; flex: none; }
.strip { width: 20px; height: 649px; flex: none; display: flex; flex-direction: column; background: linear-gradient(90deg, #30373d 0 2px, transparent 2px), linear-gradient(#3b4248, #384046 100px, #2c3337 175px, #2c3337 205px, #3a4147 235px, #363d44 400px, #3a4248 500px, #373e45); }
.strip .no { margin: 0; }
.master { background: linear-gradient(#3f474c, #3c4448 100px, #343b3f 190px, #434b50 250px, #3d4449 400px, #434b50); }
.master .no { color: #eef0f1; font-weight: bold; background: repeating-linear-gradient(45deg, #646d70 0 1px, #5d6669 1px 2px); }
.lb { height: 60px; flex: none; display: flex; justify-content: center; align-items: flex-end; padding-bottom: 4px; }
.lb span { writing-mode: vertical-rl; transform: rotate(180deg); font-size: 11px; line-height: 14px; color: #848d92; white-space: nowrap; letter-spacing: .1px; margin-right: 2px; }
.strip svg { display: block; flex: none; }
.gapc { width: 12px; background: #2a3137; border: solid #22282c; border-width: 0 1px; flex: none; display: flex; align-items: center; justify-content: center; padding-bottom: 206px; }
.gapc i { height: 10px; border-left: 1px dotted #59636a; }
.cur { width: 20px; flex: none; background: #373e44; }
.cmt { width: 18px; height: 499px; margin: 3px 0 0 1px; border: 1px solid #1f252a; background: #3a4147; display: flex; flex-direction: column; align-items: center; color: #5b646a; font-size: 13px; }
.cmt span { width: 10px; height: 38px; border-bottom: 1px solid #2a3137; text-align: center; line-height: 14px; padding-top: 21px; flex: none; }
.cmt i { width: 16px; flex: none; height: 366px; margin-top: 17px; background: linear-gradient(90deg, transparent 7px, #6a8a3a 7px 9px, transparent 9px), linear-gradient(#f0b545 0 19px, #b4dc50 19px, #a6dc40); }

/* measurement page */
.chrome { position: absolute; left: 1857px; top: 0; width: 1583px; height: 1400px; border: 1px solid #1fb4c6; border-width: 1px 1px 1px 2px; background: #fff; color: #000; display: flex; flex-direction: column; }
.ctitle { height: 28px; background: #dee1e6; border-bottom: 1px solid #adadad; display: flex; align-items: center; padding: 0 12px 0 5px; color: #444; font-size: 12px; flex: none; }
.ctitle .u { margin-left: 7px; color: #1a1a1a; font-size: 12.500px; }
.caddr { height: 27px; background: #f1f3f4; border-bottom: 1px solid #b0b0b0; display: flex; align-items: center; padding: 0 11px 0 10px; font-size: 14px; flex: none; color: #333; }
.wn { color: #d93025; margin-right: 9px; }
.ns { color: #d93025; }
.caddr i { width: 1px; height: 16px; background: #b0b3b8; margin: 0 9px 0 8px; }
.hs { color: #d93025; text-decoration: line-through; }
.gy { color: #80868b; }
.cm9 { color: #5f6368; }
.cmain { flex: 1; display: flex; min-height: 0; }
.cpage { width: 1563px; padding-left: 8px; overflow: hidden; flex: none; }
h1, h3 { margin: 0; font-family: "Liberation Serif", serif; font-weight: bold; white-space: nowrap; }
h1 span, h3 span { display: inline-block; }
h1 { font-size: 32px; line-height: 38px; padding-top: 20px; }
h3 { font-size: 18.700px; line-height: 22px; margin-top: 19px; }
.fs { width: 902px; border: solid #a9a9a9; border-width: 2px 2px 1px 1px; border-top-color: #808080; border-right-color: #b4b4b4; box-shadow: 0 0 2px #999, inset 0 3px 2px -1px #bbb; background: #fff; }
.f1 { height: 121px; margin-top: 18px; padding: 4px 0 0 4px; border-top-width: 3px; }
.lvl { display: flex; align-items: center; gap: 3px; font: bold 8px "DejaVu Sans", sans-serif; color: #333; margin-top: 17px; height: 10px; }
.lvl i { width: 100px; height: 10px; background: #ddd; margin-right: 2px; }
.lvl b { display: block; width: 95px; height: 10px; background: linear-gradient(#ffa0a0, #f86a6a 30%, #dc4646 45%, #e05050 65%, #f87878); }
.f2 { height: 155px; margin-top: 10px; padding: 0; border-left: 0; }
.cv1 { width: 660px; height: 120px; background: #000; padding: 14px 10px 0; margin-top: -1px; }
.cv1 div { height: 96px; background: #ff6969; display: flex; align-items: center; justify-content: center; }
.cv1 i { width: 96px; height: 2px; background: #f00; margin-left: 0; margin-top: -3px; }
.rws { margin: 9px 0 0 5px; }
.cv { display: block; }
.cv text { font: italic 9.500px "Liberation Sans", sans-serif; fill: #727200; }
.cv text.r { fill: #f00000; }
.f2 + .cv { margin-top: 1px; }
.f3, .f4 { height: 35px; padding: 9px 0 0 4px; border-top: 0; box-shadow: 0 0 2px #999; }
.f5 { height: 240px; border-width: 0 2px 0 0; box-shadow: 0 -1px 2px #444, inset 0 3px 2px -1px #999; }
.vsb { width: 17px; background: #f1f1f1; display: flex; flex-direction: column; align-items: center; padding-top: 6px; color: #505050; }
.upi { transform: scaleY(-1); color: #9a9a9a; }
.vsb b { width: 13px; height: 1007px; margin-top: 4px; background: #c1c1c1; margin-bottom: 288px; }
.hsb { height: 17px; background: #f1f1f1; display: flex; align-items: center; flex: none; color: #505050; }
.lf { margin-left: 4px; color: #a3a3a3; }
.hsb b { width: 97px; height: 13px; background: #c1c1c1; margin-left: 6px; }
.hsb i { width: 17px; height: 17px; background: #dcdcdc; margin-left: 5px; }
</style>
